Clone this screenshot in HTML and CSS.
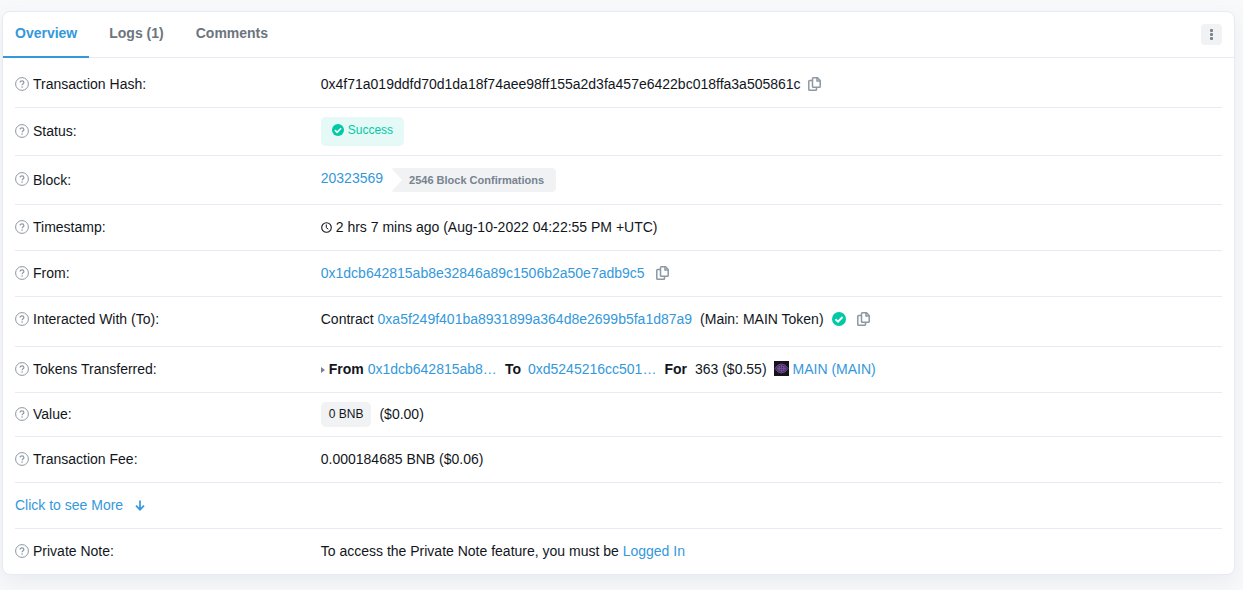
FILE: index.html
```html
<!DOCTYPE html>
<html lang="en">
<head>
    <meta charset="utf-8">
    <title>Transaction Details</title>
    <link rel="stylesheet" href="styles.css">
</head>
<body>
    <!-- shared icons -->
    <svg class="sprite" aria-hidden="true">
        <symbol id="help" viewBox="0 0 14 14">
            <circle cx="7" cy="7" r="6.4" fill="none" stroke="currentColor" stroke-width="1"/>
            <path d="M5.1 5.6C5.1 4.5 5.9 3.8 7 3.8s1.9.7 1.9 1.6C8.900 6.700 7.100 6.700 7.100 8.200" fill="none" stroke="currentColor" stroke-width="1.2"/>
            <circle cx="7.100" cy="10" r=".8" fill="currentColor"/>
        </symbol>
        <symbol id="copy" viewBox="0 0 13 14">
            <path d="M5.300.8h4.200l2.700 2.700v6a.8.8 0 0 1-.8.8H5.300a.8.8 0 0 1-.8-.8V1.600a.8.8 0 0 1 .8-.8z" fill="none" stroke="currentColor" stroke-width="1.500"/>
            <path d="M9 1v3h3M4.500 3.500H1.600a.8.8 0 0 0-.8.8v8.100a.8.8 0 0 0 .8.8h6.100a.8.8 0 0 0 .8-.8v-1.900" fill="none" stroke="currentColor" stroke-width="1.500"/>
        </symbol>
        <symbol id="check" viewBox="0 0 14 14">
            <circle cx="7" cy="7" r="7" fill="#00c9a7"/>
            <path d="M3.400 7.200l2.600 2.500 4.600-4.700" fill="none" stroke="#fff" stroke-width="1.900"/>
        </symbol>
    </svg>

    <main class="card">
        <header class="card-header">
            <nav class="tabs">
                <a class="tab active" href="#overview">Overview</a>
                <a class="tab" href="#logs">Logs (1)</a>
                <a class="tab" href="#comments">Comments</a>
            </nav>
            <button class="menu-btn" type="button" aria-label="More options">
                <svg width="3" height="11" viewBox="0 0 3 11"><g fill="currentColor"><rect width="3" height="3" rx="1"/><rect y="4" width="3" height="3" rx="1"/><rect y="8" width="3" height="3" rx="1"/></g></svg>
            </button>
        </header>

        <div class="card-body" id="overview">
            <div class="row">
                <div class="label"><svg class="help"><use href="#help"/></svg>Transaction Hash:</div>
                <div class="value">
                    <span>0x4f71a019ddfd70d1da18f74aee98ff155a2d3fa457e6422bc018ffa3a505861c</span>
                    <button class="copy-btn" type="button" aria-label="Copy hash"><svg><use href="#copy"/></svg></button>
                </div>
            </div>
            <div class="row compact">
                <div class="label"><svg class="help"><use href="#help"/></svg>Status:</div>
                <div class="value"><span class="status"><svg><use href="#check"/></svg>Success</span></div>
            </div>
            <div class="row">
                <div class="label"><svg class="help"><use href="#help"/></svg>Block:</div>
                <div class="value top">
                    <a href="#block">20323569</a>
                    <span class="confirmations">2546 Block Confirmations</span>
                </div>
            </div>
            <div class="row">
                <div class="label"><svg class="help"><use href="#help"/></svg>Timestamp:</div>
                <div class="value">
                    <svg class="clock" viewBox="0 0 11 11"><g fill="none" stroke="currentColor"><circle cx="5.500" cy="5.500" r="4.800" stroke-width="1.100"/><path d="M5.300 2.500v3.200l2 1.500"/></g></svg>
                    <span>2 hrs 7 mins ago (Aug-10-2022 04:22:55 PM +UTC)</span>
                </div>
            </div>
            <div class="row">
                <div class="label"><svg class="help"><use href="#help"/></svg>From:</div>
                <div class="value">
                    <a href="#from">0x1dcb642815ab8e32846a89c1506b2a50e7adb9c5</a>
                    <button class="copy-btn wide" type="button" aria-label="Copy sender"><svg><use href="#copy"/></svg></button>
                </div>
            </div>
            <div class="row tall">
                <div class="label"><svg class="help"><use href="#help"/></svg>Interacted With (To):</div>
                <div class="value">
                    <span>Contract <a href="#to">0xa5f249f401ba8931899a364d8e2699b5fa1d87a9</a></span>
                    <span class="next">(Main: MAIN Token)</span>
                    <svg class="verified"><use href="#check"/></svg>
                    <button class="copy-btn wide" type="button" aria-label="Copy contract"><svg><use href="#copy"/></svg></button>
                </div>
            </div>
            <div class="row">
                <div class="label"><svg class="help"><use href="#help"/></svg>Tokens Transferred:</div>
                <div class="value">
                    <svg class="caret" viewBox="0 0 4 6"><path d="M0 0l4 3-4 3z" fill="currentColor"/></svg>
                    <span><b>From</b> <a href="#from">0x1dcb642815ab8…</a></span>
                    <b class="next">To</b>
                    <a class="near" href="#receiver">0xd5245216cc501…</a>
                    <b class="next">For</b>
                    <span class="next">363 ($0.55)</span>
                    <svg class="token" viewBox="0 0 15 15">
                        <rect width="15" height="15" fill="#17131d"/>
                        <g fill="none" stroke="#76519a" stroke-width=".9">
                            <path d="M1 7.500Q3.500 3 7.500 3T14 7.500Q11.500 12 7.500 12T1 7.500z" fill="#3d2b55"/>
                            <ellipse cx="7.500" cy="7.500" rx="4" ry="2.400"/>
                            <path d="M5.500 5v5M7.500 4v7M9.500 5v5M3 7.500h9"/>
                        </g>
                    </svg>
                    <a href="#token">MAIN (MAIN)</a>
                </div>
            </div>
            <div class="row compact">
                <div class="label"><svg class="help"><use href="#help"/></svg>Value:</div>
                <div class="value"><span class="amount">0 BNB</span><span class="next">($0.00)</span></div>
            </div>
            <div class="row">
                <div class="label"><svg class="help"><use href="#help"/></svg>Transaction Fee:</div>
                <div class="value">0.000184685 BNB ($0.06)</div>
            </div>
            <div class="row">
                <a class="more" href="#more">Click to see More
                    <svg viewBox="0 0 10 11"><path d="M5 .5v9M1 5.700l4 4 4-4" fill="none" stroke="currentColor" stroke-width="1.700"/></svg>
                </a>
            </div>
            <div class="row">
                <div class="label"><svg class="help"><use href="#help"/></svg>Private Note:</div>
                <div class="value"><span>To access the Private Note feature, you must be <a href="#login">Logged In</a></span></div>
            </div>
        </div>
    </main>
</body>
</html>
```
FILE: styles.css
```css
* { box-sizing: border-box; }
body {
    margin: 0; padding: 11px 8px 15px 2px; background-color: #f8f9fb;
    font-family: Arial, "Liberation Sans", sans-serif; font-size: 14px; line-height: 21px; color: #12161c;
}
a { color: #3498db; text-decoration: none; }
button { border: none; padding: 0; cursor: pointer; }
svg { display: block; flex: none; }
.sprite { position: absolute; width: 0; height: 0; }

.card {
    background: white; border: 1px solid #e7eaf3; border-radius: 8px;
    box-shadow: 0 8px 20px rgba(140, 152, 164, 0.13);
}
.card-header {
    display: flex; justify-content: space-between; align-items: center;
    height: 46px; padding-right: 12px; border-bottom: 1px solid #e7eaf3;
}
.tabs { display: flex; gap: 8px; }
.tab { height: 46px; padding: 11px 12px; font-weight: bold; color: #6c757e; }
.tab.active { color: #3498db; border-bottom: 2px solid #3498db; }
.menu-btn {
    display: flex; justify-content: center; align-items: center;
    width: 21px; height: 21px; border-radius: 4px; background: #f1f2f4; color: #77838f;
}

.card-body { padding: 4px 12px 0; }
.row {
    display: grid; grid-template-columns: 25% 1fr; gap: 4px; align-items: center;
    padding: 12px 0; border-bottom: 1px solid #e7eaf3;
}
.row:last-child { border-bottom: none; }
.row.compact { padding: 9px 0; }
.row.tall { padding: 12px 0 16px; }
.label { display: flex; align-items: center; gap: 4px; }
.help { width: 14px; height: 14px; margin-bottom: 2px; color: #8c98a4; }
.value { display: flex; align-items: center; gap: 4px; }
.value.top { align-items: flex-start; }
.next { margin-left: 4px; }
.near { margin-left: 3px; }

.copy-btn { margin: 0 0 2px 3px; background: none; color: #8c98a4; }
.copy-btn.wide { margin-left: 7px; }
.copy-btn svg { width: 13px; height: 14px; }
.status {
    display: flex; align-items: center; gap: 4px; padding: 3px 11px 5px;
    border-radius: 5px; background: #e5f9f6; color: #00c9a7; font-size: 12px;
}
.status svg { width: 12px; height: 12px; margin-bottom: 2px; }
.confirmations {
    margin-left: 4px; padding: 0 12px 0 18px; border-radius: 4px;
    background: #f1f2f4; color: #77838f; font-size: 11px; font-weight: bold; line-height: 24px;
    clip-path: polygon(0 0, 100% 0, 100% 100%, 0 100%, 11px 50%);
}
.clock { width: 11px; height: 11px; }
.verified { width: 14px; height: 14px; margin: 0 0 2px 4px; }
.caret { width: 4px; height: 6px; color: #77838f; }
.token { width: 15px; height: 15px; margin: 0 0 2px 3px; }
.amount { padding: 2px 8px; border-radius: 5px; background: #f1f2f4; font-size: 12px; }
.more { display: flex; align-items: center; gap: 12px; white-space: nowrap; }
.more svg { width: 10px; height: 11px; }
```
